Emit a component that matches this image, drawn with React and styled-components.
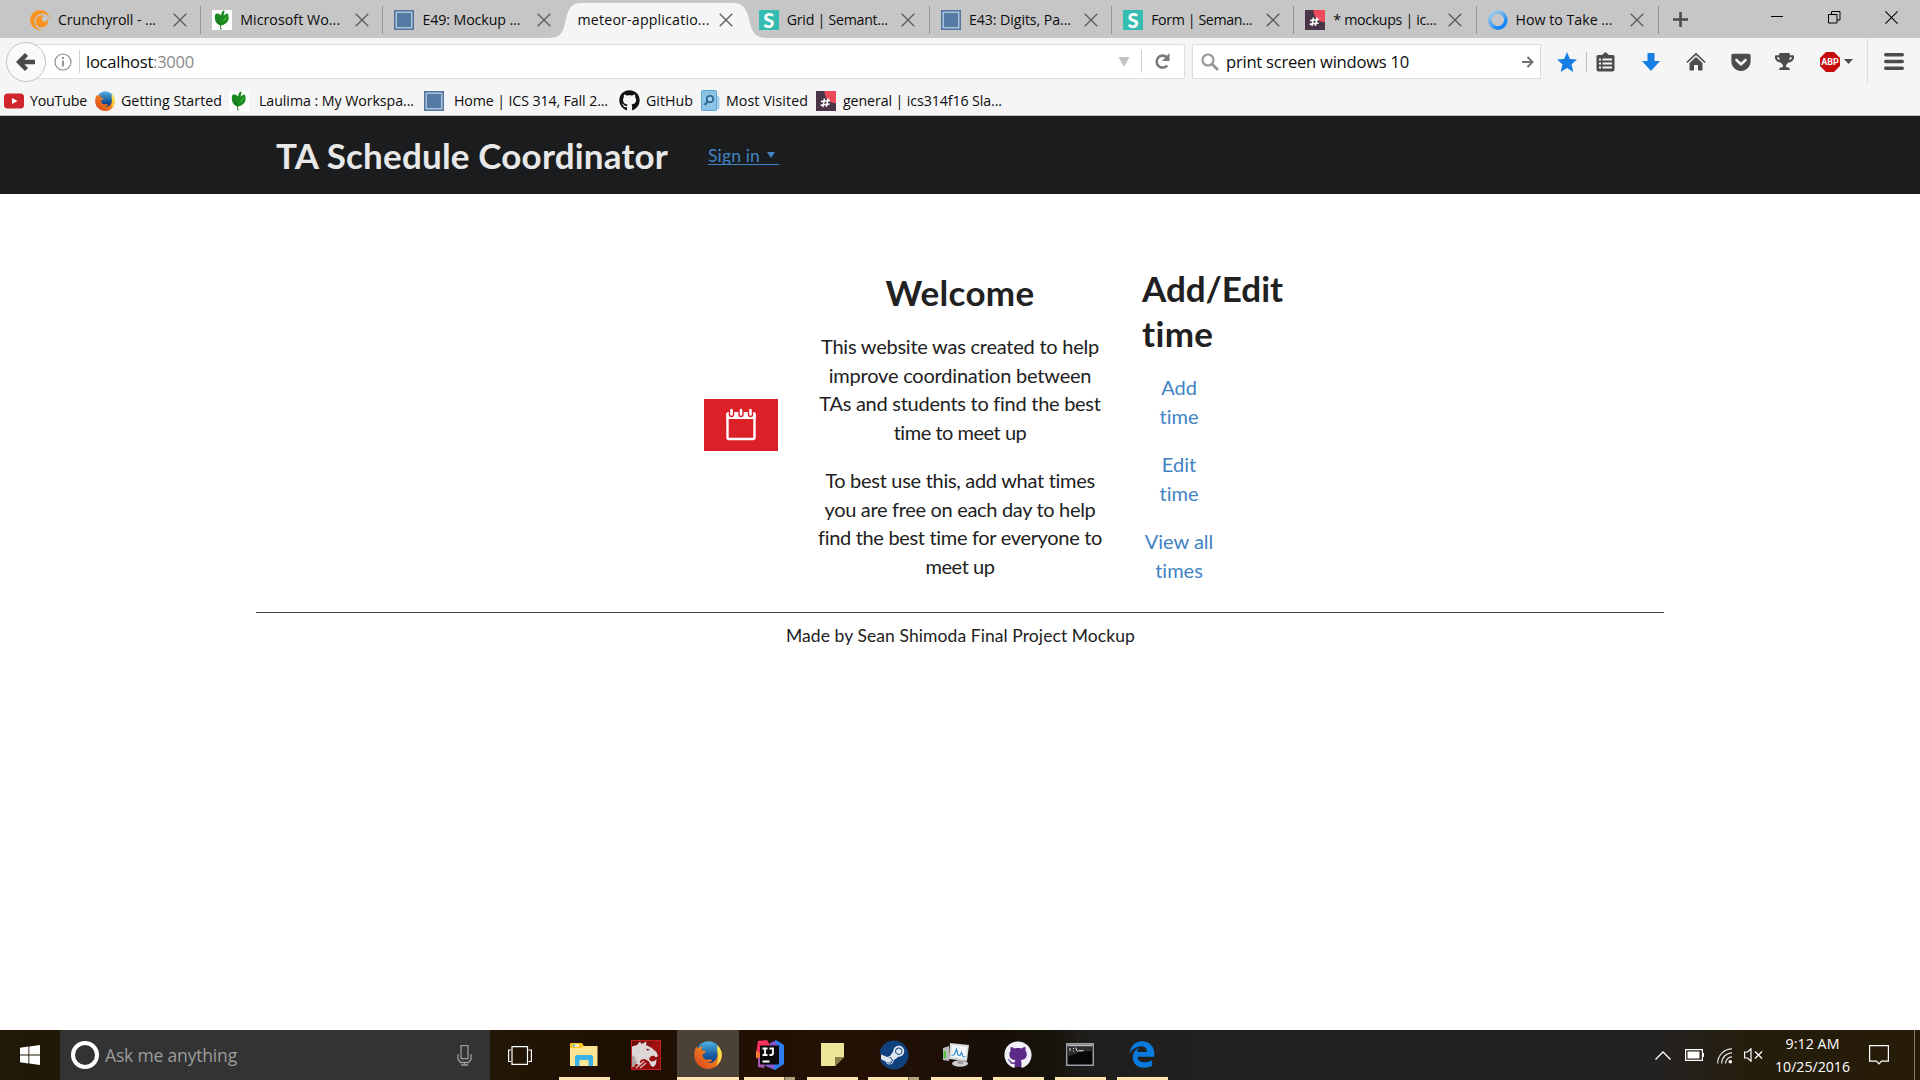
import React, { useLayoutEffect, useRef, useState } from "react";
import styled, { createGlobalStyle } from "styled-components";
import { FaGithub, FaSteam, FaGetPocket, FaTrophy } from "react-icons/fa";

const GlobalStyle = createGlobalStyle`
  * { box-sizing: border-box; }
  html, body { margin: 0; padding: 0; background: #fff; }
  body { overflow: hidden; font-family: "Open Sans", "Noto Sans", sans-serif; }
  svg { display: block; flex: none; }
`;

/* ---------- text that keeps a given advance width ---------- */
const FitText = styled.span`
  display: inline-block;
  white-space: pre;
`;

function Fit({ w, children, className }) {
  const ref = useRef(null);
  const [spacing, setSpacing] = useState(0);
  useLayoutEffect(() => {
    const natural = ref.current.getBoundingClientRect().width;
    setSpacing((w - natural) / ref.current.textContent.length);
  }, [w]);
  return (
    <FitText ref={ref} className={className} style={{ letterSpacing: spacing + "px" }}>
      {children}
    </FitText>
  );
}

/* ---------- window ---------- */
const Screen = styled.div`
  width: 1920px;
  height: 1080px;
  display: flex;
  flex-direction: column;
  background: #fff;
  overflow: hidden;
`;

const TabStrip = styled.div`
  height: 38px;
  flex: none;
  display: flex;
  background: #c6c6c6;
  padding-left: 18px;
`;

const Tab = styled.div`
  width: 182.2px;
  height: 38px;
  display: flex;
  align-items: center;
  padding-top: 1px;
  padding-left: ${(p) => p.$pad ?? 12}px;
  padding-right: 13.500px;
  position: relative;
  font-size: 14.2px;
  color: #0c0c0c;
`;

const TabDivider = styled.i`
  position: absolute;
  right: -1px;
  top: 6px;
  width: 1px;
  height: 28px;
  background: #959595;
`;

const TabShape = styled.svg`
  position: absolute;
  left: -14px;
  top: 0;
`;

const TabLabel = styled.div`
  position: relative;
  margin-left: ${(p) => (p.$bare ? 0 : 8)}px;
  flex: 1;
  line-height: 38px;
  white-space: nowrap;
`;

const CloseMark = styled.svg`
  position: relative;
`;

const NewTab = styled.div`
  width: 46px;
  display: flex;
  align-items: center;
  justify-content: center;
`;

const WindowButtons = styled.div`
  margin-left: auto;
  height: 34px;
  display: flex;
  align-items: center;
  gap: 44px;
  padding-right: 22px;
`;

const NavBar = styled.div`
  height: 47px;
  flex: none;
  display: flex;
  align-items: center;
  background: #f5f5f5;
  padding-left: 6px;
`;

const BackButton = styled.div`
  width: 40px;
  height: 40px;
  flex: none;
  border-radius: 50%;
  border: 1px solid #c3c3c3;
  background: #fafafa;
  display: flex;
  align-items: center;
  justify-content: center;
  position: relative;
  z-index: 1;
`;

const UrlField = styled.div`
  width: 1151px;
  height: 35px;
  flex: none;
  margin-left: -12px;
  border: 1px solid #dedede;
  border-radius: 0 2px 2px 0;
  background: #fff;
  display: flex;
  align-items: center;
  padding-left: 19px;
  font-size: 16.6px;
  color: #0c0c0c;
`;

const Rule = styled.i`
  width: 1px;
  height: ${(p) => p.$h}px;
  background: ${(p) => p.$c || "#d0d0d0"};
  margin: 0 ${(p) => p.$r || 0}px 0 ${(p) => p.$l || 0}px;
`;

const Muted = styled.span`
  color: #8a8a8a;
`;

const Spacer = styled.div`
  flex: 1;
`;

const SearchField = styled.div`
  width: 349px;
  height: 35px;
  flex: none;
  margin-left: 7px;
  border: 1px solid #dedede;
  background: #fff;
  display: flex;
  align-items: center;
  padding: 0 6px 0 8px;
  font-size: 16.6px;
  color: #0c0c0c;
`;

const ToolGroup = styled.div`
  flex: 1;
  display: flex;
  align-items: center;
`;

const Tool = styled.div`
  width: ${(p) => p.$w}px;
  margin-left: ${(p) => p.$l}px;
  display: flex;
  align-items: center;
  justify-content: center;
  color: #4c4c4c;
`;

const Bookmarks = styled.div`
  height: 31px;
  flex: none;
  display: flex;
  align-items: center;
  background: #f5f5f5;
  border-bottom: 1px solid #bdbdbd;
  font-size: 14.2px;
  color: #0c0c0c;
  padding: 1px 0 0 4px;
`;

const Bookmark = styled.div`
  display: flex;
  align-items: center;
  width: ${(p) => p.$w}px;
  gap: ${(p) => p.$gap ?? 6}px;
  line-height: 29px;
`;

/* ---------- page ---------- */
const SiteHeader = styled.header`
  height: 78px;
  flex: none;
  background: #1b1c1d;
  display: flex;
  align-items: center;
  padding-left: 276px;
  font-family: Lato, sans-serif;
`;

const Brand = styled.h1`
  margin: 0;
  width: 432px;
  font-size: 35px;
  line-height: 45px;
  font-weight: 700;
  color: #e8e8e8;
  padding-top: 1px;
`;

const SignIn = styled.a`
  display: flex;
  align-items: center;
  width: 71px;
  height: 19px;
  margin-top: 1px;
  border-bottom: 1px solid #4183c4;
  font-size: 17.5px;
  color: #4183c4;
`;

const Caret = styled.i`
  border: 4px solid transparent;
  border-top: 6px solid #4183c4;
  border-bottom: 0;
  margin-left: 7px;
`;

const Page = styled.main`
  flex: 1;
  display: flex;
  flex-direction: column;
  align-items: center;
  background: #fff;
  font-family: Lato, sans-serif;
  color: #212121;
`;

const Columns = styled.section`
  width: 1408px;
  height: 419px;
  display: grid;
  grid-template-columns: 74px 284px 160px;
  column-gap: 40px;
  padding: 72px 0 0 448px;
  border-bottom: 1px solid #444;
`;

const IconCell = styled.div`
  padding-top: 133px;
`;

const RedTile = styled.div`
  width: 74px;
  height: 52px;
  background: #db2028;
  display: flex;
  align-items: center;
  justify-content: center;
  padding-bottom: 2px;
`;

const WelcomeCell = styled.div`
  text-align: center;
  font-size: 20px;
  line-height: 28.57px;
`;

const Heading = styled.h1`
  margin: 0 0 ${(p) => p.$gap}px;
  padding-top: ${(p) => p.$top || 0}px;
  font-size: 35px;
  line-height: 45px;
  font-weight: 700;
  text-align: ${(p) => p.$align || "left"};
`;

const Paragraph = styled.p`
  margin: 0 0 20px;
  white-space: nowrap;
`;

const Links = styled.nav`
  width: 74px;
  display: flex;
  flex-direction: column;
  gap: 20px;
  text-align: center;
  font-size: 20px;
  line-height: 28.57px;
  font-variant-ligatures: none;
`;

const PageLink = styled.a`
  color: #4183c4;
  white-space: nowrap;
`;

const Footer = styled.footer`
  padding-top: 10px;
  padding-left: 1px;
  font-size: 17.5px;
  line-height: 25px;
`;

/* ---------- taskbar ---------- */
const Taskbar = styled.div`
  height: 50px;
  flex: none;
  display: flex;
  background: linear-gradient(90deg, #221807 0, #221606 490px, #1e1002 620px, #251004 860px, #180f07 990px, #17130b 1050px, #201e1c 1085px, #242220 1300px, #242220 1660px, #251c0a 1760px, #261c08 100%);
`;

const StartButton = styled.div`
  width: 60px;
  display: flex;
  align-items: center;
  justify-content: center;
`;

const CortanaBox = styled.div`
  width: 430px;
  background: #333;
  display: flex;
  align-items: center;
  padding: 0 18px 0 11px;
  color: #9c9c9c;
  font-size: 17.5px;
`;

const CortanaRing = styled.div`
  width: 28px;
  height: 28px;
  border: 4px solid #fff;
  border-radius: 50%;
  margin-right: 6px;
`;

const TaskView = styled.div`
  width: 63px;
  display: flex;
  align-items: center;
  padding-left: 18px;
`;

const AppButton = styled.div`
  width: 62px;
  height: 50px;
  display: flex;
  flex-direction: column;
  align-items: center;
  background: ${(p) => (p.$active ? "#4b4137" : "transparent")};
`;

const AppIcon = styled.div`
  height: 47px;
  display: flex;
  align-items: center;
  padding-top: 2px;
`;

const OpenBar = styled.div`
  width: ${(p) => (p.$active ? 62 : 51)}px;
  height: 3px;
  display: flex;
  margin-left: ${(p) => (p.$multi ? -1 : 0)}px;
  background: ${(p) => (p.$open ? "#fee5b0" : "transparent")};
`;

const MoreBar = styled.i`
  width: 11px;
  height: 3px;
  margin-left: auto;
  background: #b2a07c;
  border-left: 1px solid #6f6146;
`;

const Tray = styled.div`
  margin-left: auto;
  display: flex;
  align-items: center;
  color: #fff;
`;

const TrayItem = styled.div`
  margin-left: ${(p) => p.$l}px;
  padding-top: ${(p) => p.$t || 0}px;
`;

const Clock = styled.div`
  width: 75px;
  margin-left: 12px;
  display: flex;
  flex-direction: column;
  align-items: center;
  font-size: 14.2px;
  line-height: 23px;
`;

const ShowDesktop = styled.div`
  width: 6px;
  height: 50px;
  margin-left: 25px;
  border-left: 1px solid #837c6e;
`;

/* ---------- icons ---------- */
const Crunchy = () => (
  <svg width="20" height="24" viewBox="0 0 20 24">
    <circle cx="10" cy="12" r="10" fill="#f7931e" />
    <circle cx="12.400" cy="13.600" r="8" fill="#c6c6c6" />
    <path d="M20.500 13v11H9l1.500-2.200 8-3.500z" fill="#c6c6c6" />
    <circle cx="11.800" cy="13.400" r="6.200" fill="#f7931e" />
    <circle cx="14.600" cy="10.800" r="2.800" fill="#c6c6c6" />
  </svg>
);

const Leaf = () => (
  <svg width="20" height="20" viewBox="0 0 20 20">
    <rect width="20" height="20" fill="#fff" />
    <path d="M9 5.500C7 3.500 5 3 3.500 4 2.500 6 2.600 9 3.600 11.500 4.800 13.800 6.500 15 9.300 15.500c3.200-.6 6.200-2.800 7.200-6 .3-2 .2-4.500-1-6-1.500.3-3 1.200-3.800 2.500.1-1.800.3-3.500 1-5L11 .5C9.800 2 9.300 3.700 9 5.500z" fill="#1c8a22" />
    <path d="M5.500 8c.8 3 2 5.500 3.300 7.500L9.600 19.500H8.400c.2-1.500 0-3-.6-4.500-1.300-1.500-2.200-4-2.300-7z" fill="#0c5914" />
    <path d="M15.500 6c-2 1-4 3-5 6 2.500-1 4.500-3 5-6z" fill="#3fb135" />
  </svg>
);

const BlueFrame = () => (
  <svg width="20" height="20" viewBox="0 0 20 20">
    <rect width="20" height="20" fill="#4f749f" />
    <rect x="1.500" y="1.500" width="17" height="17" fill="#adc2d8" />
    <rect x="3" y="3" width="14" height="14" fill="#557aa4" />
  </svg>
);

const SemanticBox = styled.div`
  width: 20px;
  height: 20px;
  background: #35bdb2;
  color: #fff;
  font: 900 20px/20px Lato, sans-serif;
  text-align: center;
`;

const Slack = () => (
  <svg width="20" height="20" viewBox="0 0 20 20">
    <rect width="20" height="20" fill="#4a3448" />
    <path d="M8.500 0H20v12.300C13 12 8.500 7 8.500 0z" fill="#ef4a5c" />
    <path d="M8.500 7.500 7 16.200M12 7.300l-1.500 8.500M5 10.400l9-1M4.600 14.200l9-1.200" stroke="#fff" strokeWidth="1.500" fill="none" />
  </svg>
);

const BlueRing = () => (
  <svg width="20" height="20" viewBox="0 0 20 20">
    <defs>
      <linearGradient id="ring" x1="0.100" y1="0.100" x2="0.700" y2="0.900">
        <stop offset="0" stopColor="#9ccbea" />
        <stop offset="0.500" stopColor="#5aacf0" />
        <stop offset="1" stopColor="#1685f8" />
      </linearGradient>
    </defs>
    <path d="M7.500 17.600A8 8 0 1 1 9 17.900" fill="none" stroke="url(#ring)" strokeWidth="3.600" />
    <circle cx="8.800" cy="17.800" r="1.900" fill="#1685f8" />
  </svg>
);

const YouTube = () => (
  <svg width="20" height="16" viewBox="0 0 20 16">
    <rect y="0.500" width="20" height="15" rx="3.500" fill="#d0262b" />
    <path d="M8 5l5.500 3L8 11z" fill="#fff" />
  </svg>
);

const Firefox = ({ size = 20 }) => (
  <svg width={size} height={size} viewBox="0 0 28 28">
    <defs>
      <linearGradient id="ffglobe" x1="0" y1="0" x2="0" y2="1">
        <stop offset="0" stopColor="#4fb4e4" />
        <stop offset="0.600" stopColor="#17559c" />
        <stop offset="1" stopColor="#0d2f6b" />
      </linearGradient>
      <linearGradient id="fffox" x1="0" y1="1" x2="1" y2="0">
        <stop offset="0" stopColor="#d8401c" />
        <stop offset="0.550" stopColor="#ee7a1f" />
        <stop offset="1" stopColor="#fbd634" />
      </linearGradient>
    </defs>
    <circle cx="14.500" cy="12.500" r="12.200" fill="url(#ffglobe)" />
    <path d="M23.500 4.500C27 8 28.300 12 27.700 16c-1 7-6.700 12-13.700 12C6.500 28 .3 22 .3 14.500.3 11 1 7.500 2.500 5.200c.2 1 .6 1.800 1.200 2.300C5 6 7 5.600 9 6.300c-1 .8-1.500 2-1.300 3 1.300.6 2.600.3 4.200.7 0 1.500-2 2.300-3.200 3.300-.2 1.700.2 3.400 1.800 4.700 2 1.400 4.200.2 6 .2 1 0 1.700.7 1.300 1.300-1.200 1.700-3.500 2.200-5.300 2 5.500 1.800 10.500-1.500 11-7.500.2-3.500-.3-6.500 0-9.500z" fill="url(#fffox)" />
    <path d="M23.500 4.500C27.500 8 28.500 13 27 18c-1 3-3 5-5 6.500 2.500-4 3.500-9 1.500-14z" fill="#fde04a" />
  </svg>
);

const MostVisited = () => (
  <svg width="19" height="21" viewBox="0 0 19 21">
    <rect x="8" y="6" width="10.500" height="13.500" rx="2" fill="#a5cfe8" />
    <rect x="0.500" y="0.500" width="15" height="20" rx="1" fill="#8cc2e3" stroke="#5ba4d0" />
    <circle cx="9" cy="9" r="3.200" fill="#a8d2ea" stroke="#2d6a96" strokeWidth="1.800" />
    <path d="M6.500 11.500 3.800 15" stroke="#2d6a96" strokeWidth="2.200" />
  </svg>
);

const Explorer = () => (
  <svg width="28" height="24" viewBox="0 0 28 24">
    <path d="M0 1h11l2 2h14.500v20H0z" fill="#ffe493" />
    <path d="M0 1q0-1 1-1h11l1.500 2v1.500L11 5H0z" fill="#f9c424" />
    <rect x="3" y="1.500" width="6" height="2" fill="#fff" />
    <rect x="3" y="1.500" width="2" height="2" fill="#3aaede" />
    <path d="M5 23V14q0-2 2-2h14q2 0 2 2v9h-4.500v-6h-9v6z" fill="#3bb0e5" />
  </svg>
);

const Dragon = () => (
  <svg width="30" height="30" viewBox="0 0 30 30">
    <defs>
      <linearGradient id="drg" x1="0" y1="0" x2="1" y2="1">
        <stop offset="0" stopColor="#5c0a0a" />
        <stop offset="0.500" stopColor="#a51212" />
        <stop offset="1" stopColor="#7c0708" />
      </linearGradient>
    </defs>
    <rect x="0.500" y="0.500" width="29" height="29" fill="url(#drg)" stroke="#c4201f" />
    <path d="M1 6.500 6 5l3-3.500 1.500 2.500 5-2.500L15 5l5 2.500 5.500 4.500 1.500 4-2 1.500-2.500-2-3 1-1.500 2.500 2 2.500 3.500-.5 2-2-.5 5-2.500 3-2.500-1-2-4.500-4-2.500-3.500.5-2 2 1.500 2.500-2 1-3-1.500L1 26z" fill="#dcd7d6" />
    <path d="M15 8.500l4 1.200-2.500 1z" fill="#5e0d0d" />
    <path d="M1 15l4 3-2 3 4-1-4 7H1z" fill="#aaa3a2" />
    <path d="M5 28l8-7M9 28l6-5" stroke="#d9c6c6" strokeWidth="1.100" />
  </svg>
);

const IntelliJ = () => (
  <svg width="30" height="30" viewBox="0 0 30 30">
    <path d="M3 1l9-1 3 5-5 13L1 13z" fill="#f5315f" />
    <path d="M1 11l6 3 2 6-8-2z" fill="#f97a29" />
    <path d="M3 17l8 2-2 9-6-1z" fill="#a857b0" />
    <path d="M15 4l6-4 8 5v19l-9 6-9-4z" fill="#2d7cf0" />
    <path d="M15 3l5-2 2 5-8 3z" fill="#8a4fd0" />
    <path d="M8 25l11-1v5z" fill="#9152cf" />
    <rect x="5" y="5.500" width="19" height="19" fill="#0a0a0a" />
    <path d="M7.500 8.500h5M10 8.500v6.500M7.500 15h5M14.500 8.500H18v4.500q0 2-2 2h-1.500M7.500 21.500h7" stroke="#fff" strokeWidth="1.800" fill="none" />
  </svg>
);

const Note = () => (
  <svg width="23" height="23" viewBox="0 0 23 23">
    <path d="M0 0h23v14l-9 9H0z" fill="#efe59a" />
    <path d="M14 23v-9h9z" fill="#857c48" />
  </svg>
);

const Edge = () => (
  <svg width="26" height="27" viewBox="20 4 472 504">
    <path d="M25.714 228.163c.111-.162.23-.323.342-.485-.021.162-.045.323-.065.485h-.277zm460.572 15.508c0-44.032-7.754-84.465-28.801-122.405C416.498 47.879 343.912 8.001 258.893 8.001 118.962 7.724 40.617 113.214 26.056 227.679c42.429-61.312 117.073-121.376 220.375-124.966 0 0 109.666 0 99.419 104.957H169.997c6.369-37.386 18.554-58.986 34.339-78.926-75.048 34.9-121.85 96.096-120.742 188.315.83 71.448 50.124 144.836 120.743 171.976 83.357 31.848 192.776 7.2 240.132-21.324V363.307c-80.864 56.494-270.871 60.925-272.255-67.572h314.073v-52.064z" fill="#0a7bdc" />
  </svg>
);

const Disc = styled.div`
  width: ${(p) => p.$s}px;
  height: ${(p) => p.$s}px;
  border-radius: 50%;
  display: flex;
  align-items: center;
  justify-content: center;
  background: radial-gradient(circle, ${(p) => p.$bg} 0 62%, transparent 63%);
  color: ${(p) => p.$fg};
`;

const SteamIcon = () => (
  <Disc $s={30} $bg="#dfe6ee" $fg="#10417c">
    <FaSteam size={30} />
  </Disc>
);

const GitHubDesktop = () => (
  <Disc $s={28} $bg="#5b2a86" $fg="#f1f0f8">
    <FaGithub size={28} />
  </Disc>
);

const Monitor = () => (
  <svg width="28" height="25" viewBox="0 0 28 25">
    <path d="M1 6l6-2v15l-6-1z" fill="#b9bcbc" />
    <rect x="1.500" y="9" width="2.500" height="7" fill="#4fbf3c" />
    <ellipse cx="18" cy="21.500" rx="8" ry="3.300" fill="#cfcfcf" />
    <path d="M15 17l7 1-1 4h-5z" fill="#9d9d9d" />
    <path d="M8 1l19 2-2 16-18-2z" fill="#d9dcdc" />
    <path d="M10 3l15 1.700-1.500 12-14.500-1.700z" fill="#f2f8fc" />
    <path d="M9.500 13.500l3-1 2-5.500 1.500 6 2 .5 1.500-3 1.500 4 2.500.5" stroke="#3d8ecb" strokeWidth="1.200" fill="none" />
  </svg>
);

const Terminal = () => (
  <svg width="28" height="23" viewBox="0 0 28 23">
    <rect x="0.750" y="0.750" width="26.500" height="21.500" fill="#060606" stroke="#9ba0a6" strokeWidth="1.500" />
    <path d="M1.500 1.500h25v2h-25z" fill="#b9bec4" />
    <path d="M1.500 14Q12 8 26.500 8V3.500h-25z" fill="#2e2e2e" />
    <path d="M4 5v3M7.500 5v1M7.500 7.500v1M9.500 4.500l2 4M12.500 7.700h5" stroke="#e6e6e6" strokeWidth="1" />
  </svg>
);

const Close = () => (
  <CloseMark width="14" height="14" viewBox="0 0 14 14">
    <path d="M.7.700l12.600 12.600M13.300.7.700 13.300" stroke="#5a5a5a" strokeWidth="1.300" />
  </CloseMark>
);

/* ---------- data ---------- */
const TABS = [
  { icon: <Crunchy />, text: "Crunchyroll - ...", w: 98 },
  { icon: <Leaf />, text: "Microsoft Wo...", w: 100 },
  { icon: <BlueFrame />, text: "E49: Mockup ...", w: 98 },
  { active: true, text: "meteor-applicatio...", w: 132, pad: 13 },
  { icon: <SemanticBox>S</SemanticBox>, text: "Grid | Semant...", w: 101 },
  { icon: <BlueFrame />, text: "E43: Digits, Pa...", w: 102 },
  { icon: <SemanticBox>S</SemanticBox>, text: "Form | Seman...", w: 101 },
  { icon: <Slack />, text: "* mockups | ic...", w: 103 },
  { icon: <BlueRing />, text: "How to Take ...", w: 97 },
];

const BOOKMARKS = [
  { icon: <YouTube />, text: "YouTube", w: 57, box: 91 },
  { icon: <Firefox />, text: "Getting Started", w: 101, box: 134 },
  { icon: <Leaf />, text: "Laulima : My Workspa...", w: 155, box: 195, gap: 10 },
  { icon: <BlueFrame />, text: "Home | ICS 314, Fall 2...", w: 154, box: 195, gap: 10 },
  { icon: <FaGithub size={21} color="#111" />, text: "GitHub", w: 47, box: 82 },
  { icon: <MostVisited />, text: "Most Visited", w: 82, box: 115 },
  { icon: <Slack />, text: "general | ics314f16 Sla...", w: 159, box: 190, gap: 7 },
];

const APPS = [
  { icon: <Explorer />, open: true },
  { icon: <Dragon /> },
  { icon: <Firefox size={28} />, open: true, active: true },
  { icon: <IntelliJ />, open: true, multi: true },
  { icon: <Note />, open: true },
  { icon: <SteamIcon />, open: true, multi: true },
  { icon: <Monitor />, open: true },
  { icon: <GitHubDesktop />, open: true },
  { icon: <Terminal />, open: true },
  { icon: <Edge />, open: true },
];

const WELCOME = [
  [
    ["This website was created to help", 278],
    ["improve coordination between", 263],
    ["TAs and students to find the best", 281],
    ["time to meet up", 133],
  ],
  [
    ["To best use this, add what times", 270],
    ["you are free on each day to help", 271],
    ["find the best time for everyone to", 284],
    ["meet up", 69],
  ],
];

const LINKS = [["Add", "time"], ["Edit", "time"], ["View all", "times"]];

/* ---------- app ---------- */
export default function App() {
  return (
    <Screen>
      <GlobalStyle />
      <TabStrip>
        {TABS.map((t, i) => (
          <Tab key={i} $pad={t.pad}>
            {t.active && (
              <TabShape width="222" height="38" viewBox="0 0 222 38">
                <path d="M0 38C10 37 12 32 14 23 17 10 19 3 30 3H182C193 3 196 10 199 23 201 32 204 37 214 38z" fill="#f5f5f5" />
              </TabShape>
            )}
            {t.icon}
            <TabLabel $bare={t.active}>
              <Fit w={t.w}>{t.text}</Fit>
            </TabLabel>
            <Close />
            {i !== 2 && i !== 3 && <TabDivider />}
          </Tab>
        ))}
        <NewTab>
          <svg width="17" height="17" viewBox="0 0 17 17">
            <path d="M8.500 1v15M1 8.500h15" stroke="#4a4a4a" strokeWidth="2.600" />
          </svg>
        </NewTab>
        <WindowButtons>
          <svg width="13" height="13" viewBox="0 0 13 13">
            <path d="M0 5.500h12" stroke="#000" />
          </svg>
          <svg width="13" height="13" viewBox="0 0 13 13">
            <path d="M.5 3.500h8.500v8.500H.5zM3.500 3.500V.5H12V9H9" fill="none" stroke="#000" />
          </svg>
          <svg width="13" height="13" viewBox="0 0 13 13">
            <path d="M.4.400l12.200 12.200M12.600.4.400 12.600" stroke="#000" strokeWidth="1.100" />
          </svg>
        </WindowButtons>
      </TabStrip>

      <NavBar>
        <BackButton>
          <svg width="20" height="20" viewBox="0 0 20 20">
            <path d="M10.500 2.500 3 10l7.500 7.500M4 10h15" fill="none" stroke="#4a4a4a" strokeWidth="4.400" />
          </svg>
        </BackButton>
        <UrlField>
          <svg width="18" height="18" viewBox="0 0 18 18">
            <circle cx="9" cy="9" r="8" fill="none" stroke="#8c8c8c" strokeWidth="1.200" />
            <path d="M9 7.500v6M9 4v2" stroke="#8c8c8c" strokeWidth="1.800" />
          </svg>
          <Rule $h={23} $l={7} $r={6} />
          <Fit w={108}>
            localhost<Muted>:3000</Muted>
          </Fit>
          <Spacer />
          <svg width="12" height="10" viewBox="0 0 12 10">
            <path d="M.5 0h11L6 10z" fill="#c3c3c3" />
          </svg>
          <Rule $h={23} $l={11} $r={13} />
          <svg width="16" height="17" viewBox="0 0 16 17">
            <path d="M12.200 12.500A6 6 0 1 1 11.500 4" fill="none" stroke="#7a7a7a" strokeWidth="2.600" />
            <path d="M14.500 0v8H7z" fill="#7a7a7a" />
          </svg>
          <Rule $h={1} $c="transparent" $r={12} />
        </UrlField>
        <SearchField>
          <svg width="18" height="18" viewBox="0 0 18 18">
            <circle cx="7" cy="7" r="5.500" fill="none" stroke="#979797" strokeWidth="2.200" />
            <path d="M11 11l6 6" stroke="#979797" strokeWidth="2.800" />
          </svg>
          <Rule $h={1} $c="transparent" $r={6} />
          <Fit w={183}>print screen windows 10</Fit>
          <Spacer />
          <svg width="12" height="12" viewBox="0 0 12 12">
            <path d="M0 6h10M5.500 1l5 5-5 5" fill="none" stroke="#737373" strokeWidth="1.900" />
          </svg>
        </SearchField>
        <ToolGroup>
          <Tool $w={20} $l={16}>
            <svg width="20" height="20" viewBox="0 0 20 20">
              <path d="M10 0l2.900 6.900 7.100.6-5.400 4.800L16.300 20 10 15.900 3.700 20l1.700-7.700L0 7.500l7.100-.6z" fill="#177ee6" />
            </svg>
          </Tool>
          <Rule $h={20} $l={9} $c="#bebebe" />
          <Tool $w={19} $l={9}>
            <svg width="19" height="20" viewBox="0 0 19 20">
              <path d="M6 3l3.500-3L13 3h4q1.500 0 1.500 1.500v13q0 2-2 2h-14q-2 0-2-2v-13Q.5 3 2 3z" fill="#4c4c4c" />
              <path d="M3 7.500h2M3 11.500h2M3 15.500h2M6.500 7.500H16M6.500 11.500H16M6.500 15.500H16" stroke="#f5f5f5" strokeWidth="1.900" />
            </svg>
          </Tool>
          <Tool $w={18} $l={27}>
            <svg width="18" height="18" viewBox="0 0 18 18">
              <path d="M5.500 0h7v8H18l-9 10-9-10h5.500z" fill="#177ee6" />
            </svg>
          </Tool>
          <Tool $w={20} $l={26}>
            <svg width="20" height="19" viewBox="0 0 20 19">
              <path d="M.8 10.500 10 1.800l9.200 8.700" fill="none" stroke="#4c4c4c" strokeWidth="1.600" />
              <path d="M3.500 11 10 5l6.500 6V18.500H12v-5.500H8v5.500H3.500z" fill="#4c4c4c" />
            </svg>
          </Tool>
          <Tool $w={21} $l={24}>
            <FaGetPocket size={22} />
          </Tool>
          <Tool $w={21} $l={23}>
            <FaTrophy size={19} />
          </Tool>
          <Tool $w={20} $l={25}>
            <svg width="20" height="20" viewBox="0 0 20 20">
              <path d="M6 0h8l6 6v8l-6 6H6l-6-6V6z" fill="#c70d0b" />
              <text x="10" y="13.200" fontSize="9" fontWeight="700" fill="#fff" textAnchor="middle" fontFamily="Roboto, sans-serif">ABP</text>
            </svg>
          </Tool>
          <Tool $w={9} $l={4}>
            <svg width="9" height="5" viewBox="0 0 9 5">
              <path d="M0 0h9L4.500 5z" fill="#4c4c4c" />
            </svg>
          </Tool>
          <Rule $h={45} $l={14} $c="#dcdcdc" />
          <Tool $w={20} $l={16}>
            <svg width="20" height="17" viewBox="0 0 20 17">
              <path d="M1.700 1.700h16.600M1.700 8.500h16.600M1.700 15.300h16.600" stroke="#4c4c4c" strokeWidth="3.400" strokeLinecap="round" />
            </svg>
          </Tool>
        </ToolGroup>
      </NavBar>

      <Bookmarks>
        {BOOKMARKS.map((b, i) => (
          <Bookmark key={i} $w={b.box} $gap={b.gap}>
            {b.icon}
            <Fit w={b.w}>{b.text}</Fit>
          </Bookmark>
        ))}
      </Bookmarks>

      <SiteHeader>
        <Brand>
          <Fit w={392}>TA Schedule Coordinator</Fit>
        </Brand>
        <SignIn>
          <Fit w={52}>Sign in</Fit>
          <Caret />
        </SignIn>
      </SiteHeader>

      <Page>
        <Columns>
          <IconCell>
            <RedTile>
              <svg width="32" height="33" viewBox="0 0 32 33">
                <path d="M2.500 5.500v24q0 1.500 1.500 1.500h24q1.500 0 1.500-1.500v-24" fill="none" stroke="#fff" strokeWidth="2.400" />
                <path d="M1.300 6q0-2 2-2h25.400q2 0 2 2v5H1.300z" fill="#fff" />
                <path d="M6.500 2.500v4M16 2.500v4M25.500 2.500v4" stroke="#db2028" strokeWidth="5.400" strokeLinecap="round" />
                <path d="M6.500 2v4.500M16 2v4.500M25.500 2v4.500" stroke="#fff" strokeWidth="2.600" strokeLinecap="round" />
              </svg>
            </RedTile>
          </IconCell>
          <WelcomeCell>
            <Heading $align="center" $gap={17} $top={4}>
              <Fit w={149}>Welcome</Fit>
            </Heading>
            {WELCOME.map((lines, i) => (
              <Paragraph key={i}>
                {lines.map(([line, w]) => (
                  <React.Fragment key={line}>
                    <Fit w={w}>{line}</Fit>
                    <br />
                  </React.Fragment>
                ))}
              </Paragraph>
            ))}
          </WelcomeCell>
          <div>
            <Heading $gap={17}>
              <Fit w={141}>Add/Edit</Fit>
              <br />
              <Fit w={72}>time</Fit>
            </Heading>
            <Links>
              {LINKS.map(([a, b]) => (
                <PageLink key={a}>
                  {a}
                  <br />
                  {b}
                </PageLink>
              ))}
            </Links>
          </div>
        </Columns>
        <Footer>
          <Fit w={349}>Made by Sean Shimoda Final Project Mockup</Fit>
        </Footer>
      </Page>

      <Taskbar>
        <StartButton>
          <svg width="20" height="20" viewBox="0 0 20 20">
            <path d="M0 2.800 8.400 1.600v7.900H0zM9.300 1.500 20 0v9.500H9.300zM0 10.400h8.400v8L0 17.200zM9.300 10.400H20V20L9.300 18.500z" fill="#fff" />
          </svg>
        </StartButton>
        <CortanaBox>
          <CortanaRing />
          <Fit w={132}>Ask me anything</Fit>
          <Spacer />
          <svg width="15" height="21" viewBox="0 0 15 21">
            <path d="M4 .7h7v13H4zM1 9v5.500l2.500 3h8l2.500-3V9M7.500 17.500V20M4 20h7" fill="none" stroke="#9c9c9c" strokeWidth="1.300" />
          </svg>
        </CortanaBox>
        <TaskView>
          <svg width="24" height="19" viewBox="0 0 24 19">
            <path d="M4 .6h15.500v17.800H4zM3 4H.6v11.500H3M20.500 4h2.900v11.500h-2.900" fill="none" stroke="#fff" strokeWidth="1.200" />
          </svg>
        </TaskView>
        {APPS.map((a, i) => (
          <AppButton key={i} $active={a.active}>
            <AppIcon>{a.icon}</AppIcon>
            <OpenBar $open={a.open} $active={a.active} $multi={a.multi}>
              {a.multi && <MoreBar />}
            </OpenBar>
          </AppButton>
        ))}
        <Tray>
          <TrayItem $l={0}>
            <svg width="16" height="9" viewBox="0 0 16 9">
              <path d="M.5 8.500 8 1l7.500 7.500" fill="none" stroke="#fff" strokeWidth="1.300" />
            </svg>
          </TrayItem>
          <TrayItem $l={14}>
            <svg width="19" height="12" viewBox="0 0 19 12">
              <path d="M.6.600h16.800v10.800H.6zM18.400 4v4" fill="none" stroke="#fff" strokeWidth="1.200" />
              <rect x="2.500" y="2.500" width="12" height="7" fill="#fff" />
            </svg>
          </TrayItem>
          <TrayItem $l={13} $t={1}>
            <svg width="16" height="16" viewBox="0 0 16 16">
              <path d="M.7 15.500A14.500 14.500 0 0 1 15 .8M4.700 15.500A10.500 10.500 0 0 1 15 4.800M8.500 15.500A6.800 6.800 0 0 1 15 8.800" fill="none" stroke="#e6e4e0" strokeWidth="1.200" />
              <circle cx="13.300" cy="13.700" r="1.800" fill="#fff" />
            </svg>
          </TrayItem>
          <TrayItem $l={11}>
            <svg width="19" height="14" viewBox="0 0 19 14">
              <path d="M.6 4h3L7 .8v12.400L3.600 10h-3z" fill="none" stroke="#fff" strokeWidth="1.200" />
              <path d="M11 3.500l7 7M18 3.500l-7 7" stroke="#fff" strokeWidth="1.300" />
            </svg>
          </TrayItem>
          <Clock>
            <Fit w={54}>9:12 AM</Fit>
            <Fit w={75}>10/25/2016</Fit>
          </Clock>
          <TrayItem $l={19}>
            <svg width="20" height="20" viewBox="0 0 20 20">
              <path d="M.6.600h18.800v15.500h-6.900L10 18.800 7.500 16.100H.6z" fill="none" stroke="#fff" strokeWidth="1.200" />
            </svg>
          </TrayItem>
          <ShowDesktop />
        </Tray>
      </Taskbar>
    </Screen>
  );
}
